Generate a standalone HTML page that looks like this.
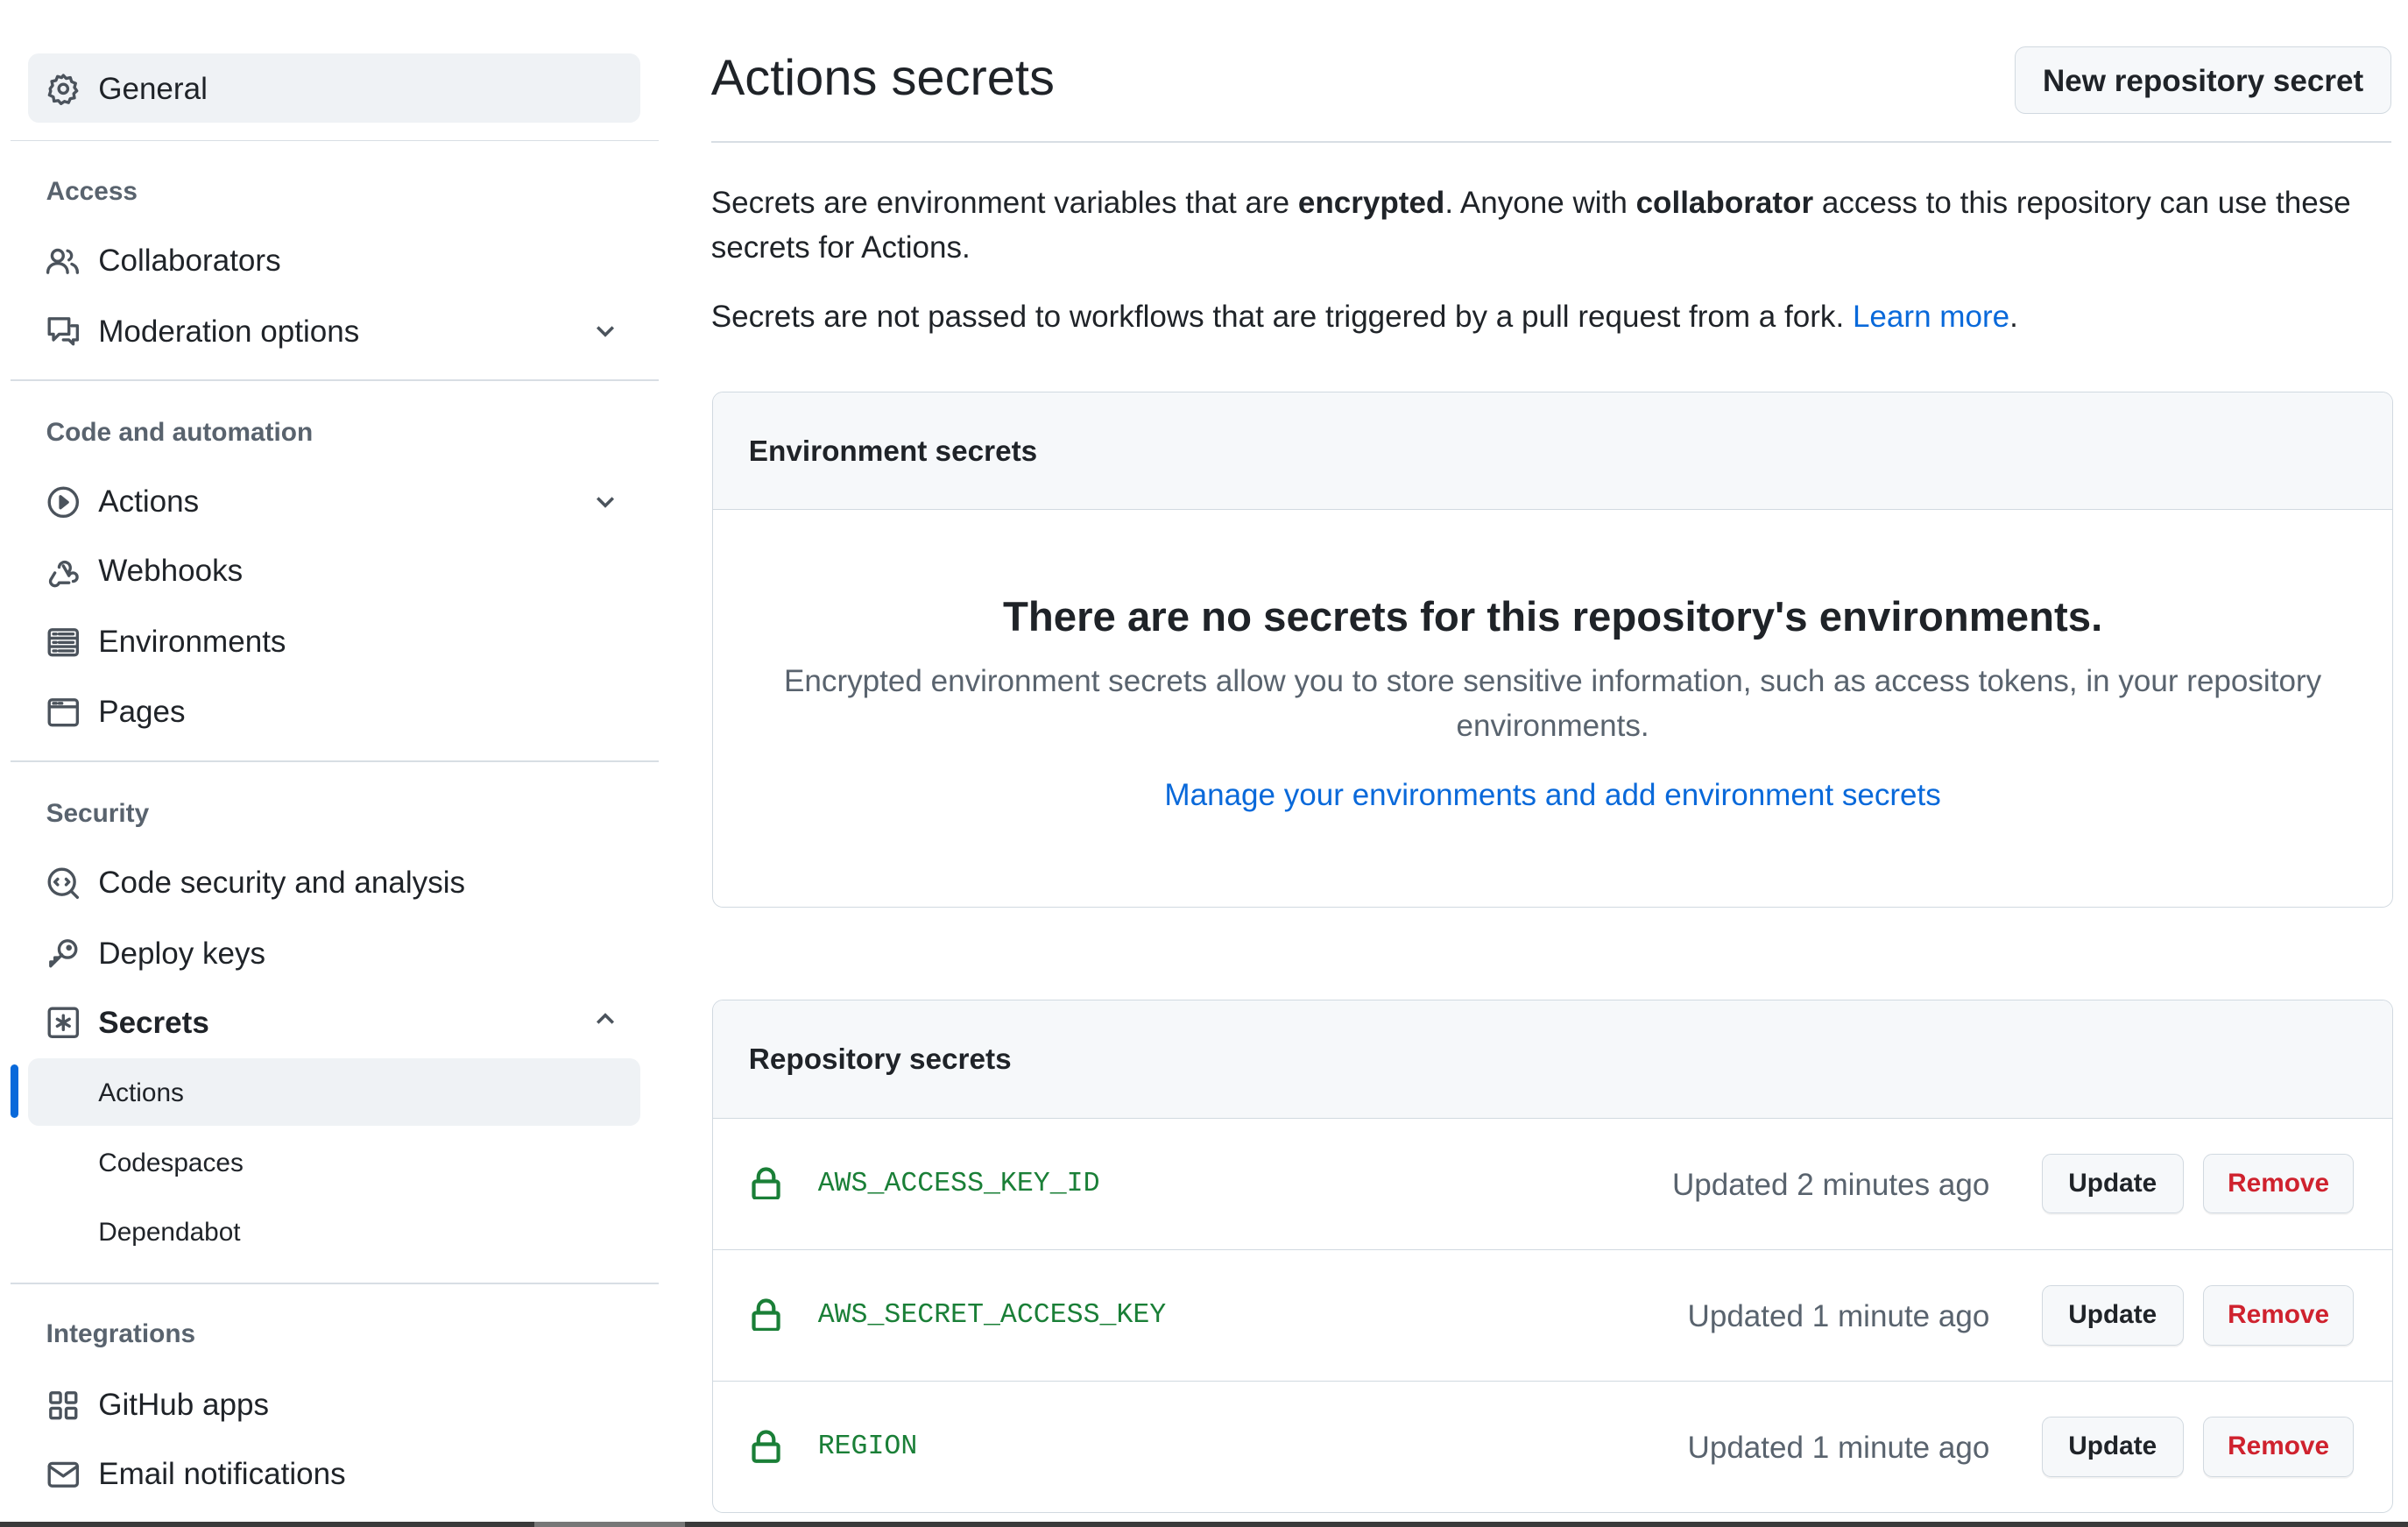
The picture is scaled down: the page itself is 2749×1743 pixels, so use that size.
<!DOCTYPE html>
<html><head><meta charset="utf-8">
<style>
html,body{margin:0;padding:0;background:#fff;overflow:hidden}
body{width:2749px;height:1743px}
#w{zoom:1.7532;width:1568px;height:994px;position:relative;font-family:"Liberation Sans",sans-serif;color:#1f2328}
.a{position:absolute;white-space:nowrap}
.hr{position:absolute;height:1px;background:#d8dee4}
.item{position:absolute;left:30px;font-size:20px;display:flex;align-items:center;height:30px}
.item svg{width:22px;height:22px;margin-right:12px;fill:none;stroke:#4b535c;stroke-width:2.1;stroke-linejoin:round;stroke-linecap:round}
.hd{position:absolute;left:30px;font-size:17px;color:#59636e;font-weight:600}
.sub{position:absolute;left:64px;font-size:17px}
.chev{position:absolute;left:386px;width:16px;height:16px;fill:none;stroke:#4b535c;stroke-width:2}
.box{position:absolute;left:464px;width:1093px;border:1px solid #d1d9e0;border-radius:7px;overflow:hidden}
.bh{background:#f6f8fa;border-bottom:1px solid #d1d9e0;height:76px;font-size:19px;font-weight:600;padding-left:23px;line-height:78px}
.row{position:relative;height:85px;border-bottom:1px solid #d1d9e0}
.row:last-child{border-bottom:none}
.lock{position:absolute;left:24px;top:31px;width:20px;height:22px;fill:none;stroke:#1a7f37;stroke-width:2.4}
.nm{position:absolute;left:68px;top:33px;font-family:"Liberation Mono",monospace;font-size:18px;color:#1a7f37}
.up{position:absolute;right:262px;top:32px;font-size:20px;color:#59636e}
.btn{position:absolute;top:23px;height:38px;border:1px solid #d1d9e0;border-radius:6px;background:#f6f8fa;font-size:17px;font-weight:600;text-align:center;line-height:38px;box-shadow:0 1px 0 rgba(31,35,40,.06)}
</style></head><body><div id="w">
<div class="a" style="left:18px;top:35px;width:399px;height:45px;background:#eff2f5;border-radius:7px"></div>
<div class="item" style="top:43px"><svg viewBox="0 0 24 24"><circle cx="12" cy="12" r="3.2"/><path d="M12 2.5l2 2.2 3-.6.9 2.9 2.8 1.2-.8 2.9 1.7 2.4-2.2 2 .5 3-3 .6-1.2 2.8-2.9-.9-2.4 1.6-2-2.2-3 .4-.5-3-2.8-1.3.9-2.8L2.6 12 4.4 9.7 3.8 6.8l3-.7L7.9 3.3l2.9.8z"/></svg>General</div>
<div class="hr" style="left:7px;top:91px;width:422px"></div>
<div class="hd" style="top:115px">Access</div>
<div class="item" style="top:155px"><svg viewBox="0 0 24 24"><circle cx="8" cy="8" r="4"/><path d="M1 20c0-4 3-6.5 7-6.5s7 2.5 7 6.5M15 4.5a3.5 3.5 0 011 6.5M18 14c2.5 1 4 3 4 6"/></svg>Collaborators</div>
<div class="item" style="top:201px"><svg viewBox="0 0 24 24"><path d="M2 3h14v11H9l-4 4v-4H2zM18 8h4v10h-3v3l-3-3h-4"/></svg>Moderation options</div>
<svg class="chev" style="top:207px" viewBox="0 0 16 16"><path d="M3 6l5 5 5-5"/></svg>
<div class="hr" style="left:7px;top:247px;width:422px"></div>
<div class="hd" style="top:272px">Code and automation</div>
<div class="item" style="top:312px"><svg viewBox="0 0 24 24"><circle cx="12" cy="12" r="10"/><path d="M10 8l5 4-5 4z" fill="#4b535c"/></svg>Actions</div>
<svg class="chev" style="top:318px" viewBox="0 0 16 16"><path d="M3 6l5 5 5-5"/></svg>
<div class="item" style="top:357px"><svg viewBox="0 0 24 24"><path d="M9 9a4 4 0 117 3M6 13l-3 5a3 3 0 106 2h7M12 8l4 7a3 3 0 11 3 4"/></svg>Webhooks</div>
<div class="item" style="top:403px"><svg viewBox="0 0 24 24"><rect x="2" y="3" width="20" height="18" rx="2"/><path d="M2 9h20M2 15h20M5 6h2M5 12h2M5 18h2M9 6h10M9 12h10M9 18h10"/></svg>Environments</div>
<div class="item" style="top:449px"><svg viewBox="0 0 24 24"><rect x="2" y="3" width="20" height="18" rx="2"/><path d="M2 8h20M5 5.5h2M9 5.5h2"/></svg>Pages</div>
<div class="hr" style="left:7px;top:495px;width:422px"></div>
<div class="hd" style="top:520px">Security</div>
<div class="item" style="top:560px"><svg viewBox="0 0 24 24"><circle cx="11" cy="11" r="9"/><path d="M8 9l-2 2 2 2M14 9l2 2-2 2M17.5 17.5L22 22"/></svg>Code security and analysis</div>
<div class="item" style="top:606px"><svg viewBox="0 0 24 24"><circle cx="15" cy="9" r="6"/><path d="M11 13l-8 8v-3h3v-3h3"/><circle cx="16" cy="8" r="1" fill="#4b535c"/></svg>Deploy keys</div>
<div class="item" style="top:651px;font-weight:600"><svg viewBox="0 0 24 24"><rect x="2" y="2" width="20" height="20" rx="2"/><path d="M12 7v10M7.7 9.5l8.6 5M7.7 14.5l8.6-5"/></svg>Secrets</div>
<svg class="chev" style="top:656px" viewBox="0 0 16 16"><path d="M3 10l5-5 5 5"/></svg>
<div class="a" style="left:18px;top:689px;width:399px;height:44px;background:#eff2f5;border-radius:7px"></div>
<div class="a" style="left:7px;top:693px;width:5px;height:35px;background:#0969da;border-radius:3px"></div>
<div class="sub" style="top:702px">Actions</div>
<div class="sub" style="top:748px">Codespaces</div>
<div class="sub" style="top:793px">Dependabot</div>
<div class="hr" style="left:7px;top:835px;width:422px"></div>
<div class="hd" style="top:859px">Integrations</div>
<div class="item" style="top:900px"><svg viewBox="0 0 24 24"><rect x="3" y="3" width="7" height="7" rx="1"/><rect x="14" y="3" width="7" height="7" rx="1"/><rect x="3" y="14" width="7" height="7" rx="1"/><rect x="14" y="14" width="7" height="7" rx="1"/></svg>GitHub apps</div>
<div class="item" style="top:945px"><svg viewBox="0 0 24 24"><rect x="2" y="4" width="20" height="16" rx="2"/><path d="M2 6l10 7 10-7"/></svg>Email notifications</div>

<div class="a" style="left:463px;top:32px;font-size:33px">Actions secrets</div>
<div class="a" style="left:1312px;top:30px;width:244px;height:43px;border:1px solid #d1d9e0;border-radius:7px;background:#f6f8fa;font-size:20px;font-weight:600;text-align:center;line-height:44px">New repository secret</div>
<div class="hr" style="left:463px;top:92px;width:1094px"></div>
<div class="a" style="left:463px;top:118px;font-size:20px;line-height:29px;white-space:normal;width:1080px">Secrets are environment variables that are <b>encrypted</b>. Anyone with <b>collaborator</b> access to this repository can use these secrets for Actions.</div>
<div class="a" style="left:463px;top:195px;font-size:20px">Secrets are not passed to workflows that are triggered by a pull request from a fork. <span style="color:#0969da">Learn more</span>.</div>

<div class="box" style="top:255px;height:335px">
<div class="bh">Environment secrets</div>
<div style="text-align:center;font-size:27px;font-weight:700;margin-top:54px">There are no secrets for this repository's environments.</div>
<div style="text-align:center;font-size:20px;color:#59636e;line-height:29px;margin:12px 40px 0">Encrypted environment secrets allow you to store sensitive information, such as access tokens, in your repository environments.</div>
<div style="text-align:center;font-size:20px;color:#0969da;margin-top:19px">Manage your environments and add environment secrets</div>
</div>

<div class="box" style="top:651px;height:333px">
<div class="bh">Repository secrets</div>
<div class="row"><svg class="lock" viewBox="0 0 20 22"><rect x="2" y="10" width="16" height="11" rx="1.5"/><path d="M5 10V7a5 5 0 0110 0v3"/></svg><div class="nm">AWS_ACCESS_KEY_ID</div><div class="up">Updated 2 minutes ago</div><div class="btn" style="left:865px;width:91px">Update</div><div class="btn" style="left:970px;width:97px;color:#cf222e">Remove</div></div>
<div class="row"><svg class="lock" viewBox="0 0 20 22"><rect x="2" y="10" width="16" height="11" rx="1.5"/><path d="M5 10V7a5 5 0 0110 0v3"/></svg><div class="nm">AWS_SECRET_ACCESS_KEY</div><div class="up">Updated 1 minute ago</div><div class="btn" style="left:865px;width:91px">Update</div><div class="btn" style="left:970px;width:97px;color:#cf222e">Remove</div></div>
<div class="row"><svg class="lock" viewBox="0 0 20 22"><rect x="2" y="10" width="16" height="11" rx="1.5"/><path d="M5 10V7a5 5 0 0110 0v3"/></svg><div class="nm">REGION</div><div class="up">Updated 1 minute ago</div><div class="btn" style="left:865px;width:91px">Update</div><div class="btn" style="left:970px;width:97px;color:#cf222e">Remove</div></div>
</div>
<div class="a" style="left:0;top:991px;width:1568px;height:3px;background:#3a3a3a"></div>
<div class="a" style="left:348px;top:991px;width:98px;height:3px;background:#777"></div>
</div></body></html>
